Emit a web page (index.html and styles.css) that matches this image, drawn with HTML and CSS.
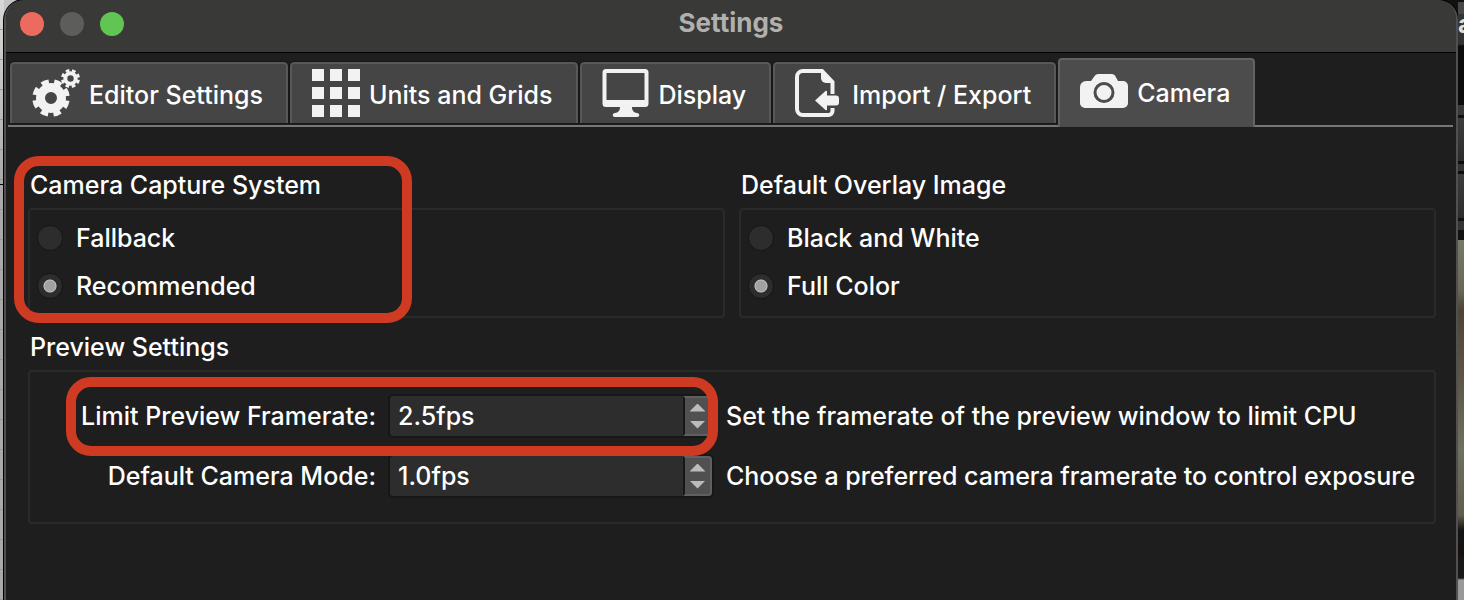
FILE: index.html
```
<!DOCTYPE html>
<html lang="en">
<head>
  <meta charset="UTF-8" />
  <meta name="viewport" content="width=device-width, initial-scale=1.0" />
  <title>Settings</title>
  <link rel="stylesheet" href="styles.css">
</head>
<body>
  <div class="desktop">
    <div class="canvas-edge"></div>

    <main class="window">
      <header class="titlebar">
        <div class="lights">
          <button class="light close" aria-label="Close"></button>
          <button class="light minimize" aria-label="Minimize" disabled></button>
          <button class="light zoom" aria-label="Zoom"></button>
        </div>
        <h1>Settings</h1>
      </header>

      <nav class="tabs" role="tablist">
        <button class="tab" role="tab">
          <svg class="icon" viewBox="0 0 48 48" fill="none" stroke="#f2f2f2">
            <circle cx="19" cy="29" r="10.5" stroke-width="9" />
            <circle cx="19" cy="29" r="16.5" stroke-width="4.5" stroke-dasharray="7.4 5.56" stroke-dashoffset="-2.8" />
            <circle cx="38.500" cy="9.500" r="5.200" stroke-width="4" />
            <circle cx="38.500" cy="9.500" r="8" stroke-width="3" stroke-dasharray="3.600 2.683" stroke-dashoffset="-1.300" />
          </svg>
          <span>Editor Settings</span>
        </button>
        <button class="tab" role="tab">
          <svg class="icon" viewBox="0 0 48 48" fill="#f2f2f2">
            <path d="M0 0h12v12H0zM18 0h12v12H18zM36 0h12v12H36zM0 18h12v12H0zM18 18h12v12H18zM36 18h12v12H36zM0 36h12v12H0zM18 36h12v12H18zM36 36h12v12H36z" />
          </svg>
          <span>Units and Grids</span>
        </button>
        <button class="tab" role="tab">
          <svg class="icon" viewBox="0 0 48 48" fill="#f2f2f2">
            <path fill-rule="evenodd" d="M4 0h39a3.500 3.500 0 0 1 3.500 3.500v31A3.500 3.500 0 0 1 43 38H30c0 4 2 5.500 5 6 3 .5 3 4 0 4H13c-3 0-3-3.500 0-4 3-.5 5-2 5-6H4a3.500 3.500 0 0 1-3.500-3.500v-31A3.500 3.500 0 0 1 4 0zM4.500 4v27h38V4z" />
          </svg>
          <span>Display</span>
        </button>
        <button class="tab" role="tab">
          <svg class="icon" viewBox="0 0 48 48">
            <path d="M37.500 25V13L27 2H8a6 6 0 0 0-6 6v32a6 6 0 0 0 6 6h25.500a4 4 0 0 0 4-4v-3" fill="none" stroke="#f2f2f2" stroke-width="4" />
            <path d="M26 1l13 13h-8a5 5 0 0 1-5-5z" fill="#f2f2f2" />
            <path d="M20 31.500l10.500-9.500c1-.6 1.500 0 1.500 1v3.500h9a3 3 0 0 1 3 3v4a3 3 0 0 1-3 3h-9V40c0 1-.5 1.600-1.500 1z" fill="#f2f2f2" />
          </svg>
          <span>Import / Export</span>
        </button>
        <button class="tab active" role="tab" aria-selected="true">
          <svg class="icon" viewBox="0 0 48 48">
            <path d="M6 14h5l4-5.500a4 4 0 0 1 3-1.500h14a4 4 0 0 1 3 1.500l3 5.500h5a5 5 0 0 1 5 5v17a5 5 0 0 1-5 5H5a5 5 0 0 1-5-5V20a6 6 0 0 1 6-6z" fill="#f2f2f2" />
            <circle cx="24" cy="25.500" r="9" fill="none" stroke="#4c4c4c" stroke-width="3" />
          </svg>
          <span>Camera</span>
        </button>
      </nav>

      <form class="content">
        <div class="columns">
          <section class="group">
            <h2>Camera Capture System</h2>
            <div class="box radios">
              <label><input type="radio" name="capture"> Fallback</label>
              <label><input type="radio" name="capture" checked> Recommended</label>
            </div>
            <div class="marker marker-capture"></div>
          </section>
          <section class="group">
            <h2>Default Overlay Image</h2>
            <div class="box radios">
              <label><input type="radio" name="overlay"> Black and White</label>
              <label><input type="radio" name="overlay" checked> Full Color</label>
            </div>
          </section>
        </div>

        <section class="group">
          <h2>Preview Settings</h2>
          <div class="box fields">
            <label for="framerate">Limit Preview Framerate:</label>
            <div class="spinner">
              <input type="text" id="framerate" value="2.5fps">
              <div class="steps">
                <button type="button" class="step up" aria-label="Increase framerate"></button>
                <button type="button" class="step down" aria-label="Decrease framerate"></button>
              </div>
            </div>
            <p>Set the framerate of the preview window to limit CPU</p>

            <label for="mode">Default Camera Mode:</label>
            <div class="spinner">
              <input type="text" id="mode" value="1.0fps">
              <div class="steps">
                <button type="button" class="step up" aria-label="Increase camera mode"></button>
                <button type="button" class="step down" aria-label="Decrease camera mode"></button>
              </div>
            </div>
            <p>Choose a preferred camera framerate to control exposure</p>
            <div class="marker marker-framerate"></div>
          </div>
        </section>
      </form>
    </main>

    <div class="app-edge"><span>a</span></div>
  </div>
</body>
</html>
```
FILE: styles.css
```
* {
  box-sizing: border-box;
}
body {
  margin: 0;
  font-family: Inter, "Liberation Sans", sans-serif;
  font-size: 25px;
  font-weight: 500;
  line-height: 32px;
  color: #fff;
  background: linear-gradient(90deg, #c4c4c4 50%, #111 50%);
}
button,
input {
  font: inherit;
  color: inherit;
  margin: 0;
}
h1,
h2,
p {
  margin: 0;
}

/* what is visible behind the window */
.desktop {
  display: flex;
  min-height: 100vh;
}
.canvas-edge {
  flex: 0 0 4px;
  background:
    linear-gradient(#000, #000) 0 184px / 4px 1px no-repeat,
    repeating-linear-gradient(transparent 0 29px, #999 29px 30px),
    linear-gradient(#d8d8d8, #aaa 180px);
}
.app-edge {
  flex: 0 0 6px;
  overflow: hidden;
  padding-top: 8px;
  font-weight: 700;
  color: #ddd;
  background: linear-gradient(
    #111 0 2px, #484848 2px 14px, #333 14px 44px, #0c0c0c 46px 105px,
    #383838 105px 115px, #111 115px 118px, #3c3c3c 118px, #2c2c2c 161px,
    #0c0c0c 161px 164px, #333 164px 171px, #0c0c0c 171px 174px,
    #3c3c3c 174px, #2c2c2c 218px, #111 218px 221px, #333 221px 230px,
    #111 230px 240px, #77786a 240px, #6a675a 290px, #4c4438 310px,
    #5d5648 380px, #6f705e 450px, #625c4e 515px, #151515 530px,
    #16110f 555px, #181818 560px 578px, #999 580px);
}

.window {
  flex: 1;
  background: #1e1e1e;
  border: 2px solid #505050;
  border-top: 0;
  border-bottom: 0;
  border-radius: 20px 20px 0 0;
  box-shadow: 0 0 0 1px #000;
  overflow: hidden;
}
.titlebar {
  position: relative;
  height: 53px;
  background: #393937;
  border-bottom: 1px solid #000;
  display: flex;
  align-items: center;
  justify-content: center;
  padding-bottom: 6px;
}
.titlebar h1 {
  font-size: 26px;
  font-weight: 700;
  color: #b0b0af;
}
.lights {
  position: absolute;
  left: 14px;
  top: 12px;
  display: flex;
  gap: 16px;
}
.light {
  width: 24px;
  height: 24px;
  padding: 0;
  border: 0;
  border-radius: 50%;
}
.close {
  background: #ed6a5e;
}
.minimize {
  background: #5d5d5b;
}
.zoom {
  background: #61c554;
}

.tabs {
  display: flex;
  align-items: flex-end;
  gap: 2px;
  height: 74px;
  margin: 0 3px 0 2px;
  padding: 0 2px 2px;
  border-bottom: 2px solid #777;
}
.tab {
  display: flex;
  align-items: center;
  gap: 9px;
  height: 61px;
  padding: 0 23px 2px 20px;
  background: #454545;
  border: 2px solid #585858;
  border-bottom: 0;
  border-radius: 4px 4px 0 0;
  outline: 1px solid #181818;
  white-space: nowrap;
}
.tab span {
  padding-top: 5px;
}
.tab.active {
  height: 69px;
  margin-bottom: -4px;
  padding-bottom: 6px;
  background: #4c4c4c;
  border-color: #626262;
  outline: 0;
}
.icon {
  width: 48px;
  height: 48px;
}

.content {
  display: flex;
  flex-direction: column;
  gap: 13px;
  padding: 42px 20px 20px 22px;
}
.columns {
  display: grid;
  grid-template-columns: 1fr 1fr;
  gap: 14px;
}
.group {
  position: relative;
}
.group h2 {
  font-size: 25px;
  font-weight: 500;
  padding-left: 2px;
  margin-bottom: 7px;
}
.box {
  border: 2px solid #2a2a2a;
  border-radius: 4px;
}
.radios {
  display: flex;
  flex-direction: column;
  gap: 16px;
  padding: 12px 7px 14px;
}
.radios label {
  display: flex;
  align-items: center;
  gap: 13px;
}
.radios input {
  appearance: none;
  width: 26px;
  height: 26px;
  border: 1px solid #161616;
  border-radius: 50%;
  background: #2d2d2d;
}
.radios input:checked {
  background: radial-gradient(circle, #a2a2a2 0 5px, #c2c2c2 6px, #2d2d2d 7px);
}

.fields {
  position: relative;
  display: grid;
  grid-template-columns: 1fr 326px 50%;
  gap: 16px 12px;
  align-items: center;
  padding: 22px 12px 24px 0;
}
.fields label {
  text-align: right;
}
.fields label,
.fields p {
  white-space: nowrap;
}
.spinner {
  display: flex;
  height: 44px;
  background: #2d2d2d;
  border: 2px solid #171717;
  border-radius: 5px;
}
.spinner input {
  flex: 1;
  min-width: 0;
  padding: 0 8px;
  background: none;
  border: 0;
  outline: 0;
}
.steps {
  display: flex;
  flex-direction: column;
  justify-content: center;
  gap: 9px;
  width: 29px;
  background: #505050;
  border: 2px solid #606060;
  border-left: 2px solid #171717;
  border-radius: 0 4px 4px 0;
}
.step {
  align-self: center;
  width: 16px;
  height: 8px;
  padding: 0;
  border: 0;
  background: #bbb;
}
.up {
  clip-path: polygon(50% 0, 100% 100%, 0 100%);
}
.down {
  clip-path: polygon(0 0, 100% 0, 50% 100%);
}

/* red call-outs drawn over the form */
.marker {
  position: absolute;
  border: 10px solid #cf3a22;
  border-radius: 25px;
  pointer-events: none;
}
.marker-capture {
  left: -14px;
  top: -13px;
  bottom: -5px;
  width: 398px;
}
.marker-framerate {
  left: 36px;
  top: 5px;
  width: 652px;
  height: 79px;
}
```
